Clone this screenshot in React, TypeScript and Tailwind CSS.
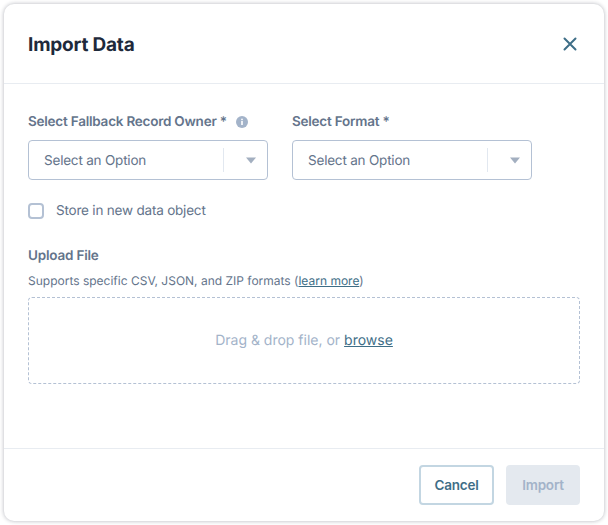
import React from "react";

function Select() {
  return (
    <div className="flex h-10 w-60 items-center rounded border border-[#b4c1d4] bg-white">
      <span className="flex-1 pt-px pl-[15px] text-[13.5px] leading-5 tracking-[-0.2px] text-[#64748b]">Select an Option</span>
      <span className="h-6 w-px bg-[#e2e8f0]" />
      <span className="flex w-[43px] justify-center pl-[10px]">
        <svg width="10" height="7" viewBox="0 0 10 7"><path d="M0 0.5H10L5 6.5Z" fill="#a3afc0" /></svg>
      </span>
    </div>
  );
}

export default function App() {
  return (
    <div className="h-[525px] w-[608px] bg-white p-1 font-['Inter',sans-serif] [text-rendering:geometricPrecision]">
      <div className="flex h-[517px] w-[600px] flex-col rounded-[10px] bg-white shadow-[0_0_4px_rgba(15,23,42,0.32)]">
        <header className="flex h-20 shrink-0 items-center justify-between border-b border-[#e8ecf1] pl-6 pr-[27px]">
          <h1 className="mt-[3px] text-[19px] font-bold tracking-[-0.2px] text-[#1e293b]">Import Data</h1>
          <svg width="14" height="14" viewBox="0 0 14 14" fill="none" stroke="#3e6e87" strokeWidth="2" strokeLinecap="round">
            <path d="M1.5 1.5L12.5 12.5M12.5 1.5L1.5 12.5" />
          </svg>
        </header>
        <main className="flex-1 px-6 pt-[28px]">
          <div className="flex gap-6">
            <div>
              <div className="mb-[8px] flex h-5 items-center text-[13.5px] leading-5 tracking-[-0.23px] font-semibold text-[#64748b]">
                Select Fallback Record Owner *
                <svg className="ml-[9px]" width="12" height="12" viewBox="0 0 12 12">
                  <circle cx="6" cy="6" r="6" fill="#a3b3c9" />
                  <rect x="5.2" y="5" width="1.6" height="4" fill="#fff" />
                  <rect x="5.2" y="2.7" width="1.6" height="1.5" fill="#fff" />
                </svg>
              </div>
              <Select />
            </div>
            <div>
              <div className="mb-[8px] flex h-5 items-center text-[13.5px] leading-5 tracking-[-0.23px] font-semibold text-[#64748b]">Select Format *</div>
              <Select />
            </div>
          </div>
          <label className="mt-[21px] flex h-5 items-center gap-3">
            <span className="h-4 w-4 rounded-[4px] border-2 border-[#b4c1d4] bg-white" />
            <span className="text-[13.5px] leading-5 tracking-[-0.2px] text-[#64748b]">Store in new data object</span>
          </label>
          <div className="mt-[25px] h-5 text-[13.5px] leading-5 tracking-[-0.2px] font-semibold text-[#64748b]">Upload File</div>
          <p className="mt-[5px] h-5 text-[12px] leading-5 text-[#64748b]">
            Supports specific CSV, JSON, and ZIP formats (<span className="text-[#3e6e87] underline">learn more</span>)
          </p>
          <div className="mt-[6px] flex h-[87px] items-center justify-center rounded border border-dashed border-[#b4c1d4] text-[14px] leading-5 text-[#a3b3c9]">
            <span>Drag &amp; drop file, or <span className="text-[#3e6e87] underline">browse</span></span>
          </div>
        </main>
        <footer className="flex h-[73px] shrink-0 items-center justify-end gap-[12px] border-t border-[#e8ecf1] px-6">
          <button className="-mt-px h-10 w-[75px] rounded border-2 border-[#c3d6e2] bg-white text-[13.5px] leading-5 tracking-[-0.2px] font-semibold text-[#3e6e87]">Cancel</button>
          <button className="-mt-px h-10 w-[74px] rounded bg-[#e4e9ef] text-[13.5px] leading-5 tracking-[-0.2px] font-semibold text-[#a3b3c9]">Import</button>
        </footer>
      </div>
    </div>
  );
}
